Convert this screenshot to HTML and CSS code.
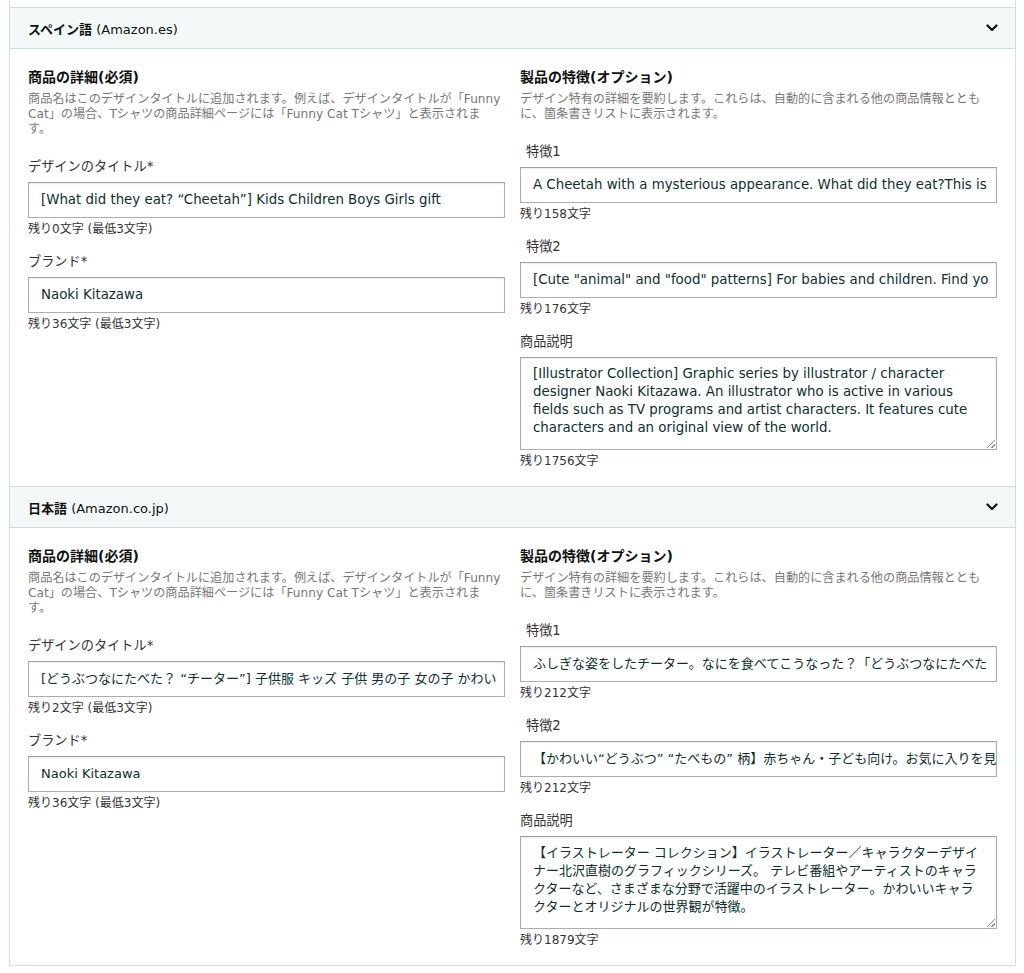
FILE: index.html
```html
<!DOCTYPE html>
<html lang="ja">
<head>
<meta charset="utf-8">
<title>Product details</title>
<link rel="stylesheet" href="styles.css">
</head>
<body>
<div class="panel">
  <div class="prev-tail"></div>

  <section class="lang latin">
    <div class="lang-head">
      <div class="lang-name"><b>スペイン語</b> (Amazon.es)</div>
      <svg class="chev" width="12" height="8" viewBox="0 0 12 8"><path d="M1.5 1.5 L6 6 L10.5 1.5" fill="none" stroke="#0f1111" stroke-width="2.2" stroke-linecap="round" stroke-linejoin="round"/></svg>
    </div>
    <div class="lang-body">
      <div class="col">
        <h3 class="sec-title">商品の詳細(必須)</h3>
        <p class="sec-desc">商品名はこのデザインタイトルに追加されます。例えば、デザインタイトルが「Funny Cat」の場合、Tシャツの商品詳細ページには「Funny Cat Tシャツ」と表示されま<br>す。</p>
        <div class="field">
          <div class="label">デザインのタイトル*</div>
          <div class="input">[What did they eat? “Cheetah”] Kids Children Boys Girls gift</div>
          <div class="hint">残り0文字 (最低3文字)</div>
        </div>
        <div class="field">
          <div class="label">ブランド*</div>
          <div class="input">Naoki Kitazawa</div>
          <div class="hint">残り36文字 (最低3文字)</div>
        </div>
      </div>
      <div class="col">
        <h3 class="sec-title">製品の特徴(オプション)</h3>
        <p class="sec-desc">デザイン特有の詳細を要約します。これらは、自動的に含まれる他の商品情報とともに、箇条書きリストに表示されます。</p>
        <div class="field">
          <div class="label indent">特徴1</div>
          <div class="input">A Cheetah with a mysterious appearance. What did they eat?This is</div>
          <div class="hint">残り158文字</div>
        </div>
        <div class="field">
          <div class="label indent">特徴2</div>
          <div class="input">[Cute "animal" and "food" patterns] For babies and children. Find yo</div>
          <div class="hint">残り176文字</div>
        </div>
        <div class="field">
          <div class="label">商品説明</div>
          <div class="textarea">[Illustrator Collection] Graphic series by illustrator / character designer Naoki Kitazawa. An illustrator who is active in various fields such as TV programs and artist characters. It features cute characters and an original view of the world.<span class="grip"></span></div>
          <div class="hint">残り1756文字</div>
        </div>
      </div>
    </div>
  </section>

  <section class="lang">
    <div class="lang-head">
      <div class="lang-name"><b>日本語</b> (Amazon.co.jp)</div>
      <svg class="chev" width="12" height="8" viewBox="0 0 12 8"><path d="M1.5 1.5 L6 6 L10.5 1.5" fill="none" stroke="#0f1111" stroke-width="2.2" stroke-linecap="round" stroke-linejoin="round"/></svg>
    </div>
    <div class="lang-body last">
      <div class="col">
        <h3 class="sec-title">商品の詳細(必須)</h3>
        <p class="sec-desc">商品名はこのデザインタイトルに追加されます。例えば、デザインタイトルが「Funny Cat」の場合、Tシャツの商品詳細ページには「Funny Cat Tシャツ」と表示されま<br>す。</p>
        <div class="field">
          <div class="label">デザインのタイトル*</div>
          <div class="input">[どうぶつなにたべた？ “チーター”] 子供服 キッズ 子供 男の子 女の子 かわい</div>
          <div class="hint">残り2文字 (最低3文字)</div>
        </div>
        <div class="field">
          <div class="label">ブランド*</div>
          <div class="input">Naoki Kitazawa</div>
          <div class="hint">残り36文字 (最低3文字)</div>
        </div>
      </div>
      <div class="col">
        <h3 class="sec-title">製品の特徴(オプション)</h3>
        <p class="sec-desc">デザイン特有の詳細を要約します。これらは、自動的に含まれる他の商品情報とともに、箇条書きリストに表示されます。</p>
        <div class="field">
          <div class="label indent">特徴1</div>
          <div class="input">ふしぎな姿をしたチーター。なにを食べてこうなった？「どうぶつなにたべた</div>
          <div class="hint">残り212文字</div>
        </div>
        <div class="field">
          <div class="label indent">特徴2</div>
          <div class="input">【かわいい“どうぶつ” “たべもの” 柄】赤ちゃん・子ども向け。お気に入りを見</div>
          <div class="hint">残り212文字</div>
        </div>
        <div class="field">
          <div class="label">商品説明</div>
          <div class="textarea">【イラストレーター コレクション】イラストレーター／キャラクターデザイナー北沢直樹のグラフィックシリーズ。 テレビ番組やアーティストのキャラクターなど、さまざまな分野で活躍中のイラストレーター。かわいいキャラクターとオリジナルの世界観が特徴。<span class="grip"></span></div>
          <div class="hint">残り1879文字</div>
        </div>
      </div>
    </div>
  </section>
</div>
</body>
</html>
```

FILE: styles.css
```css
* { box-sizing: border-box; }
html, body { margin: 0; padding: 0; background: #fff; }
body {
  font-family: "DejaVu Sans", "Noto Sans CJK JP", sans-serif;
  color: #0f1111;
}
.panel {
  margin: 0 8px 0 9px;
  width: 1007px;
}
.prev-tail {
  height: 7px;
  border-left: 1px solid #d2e3e5;
  border-right: 1px solid #d2e3e5;
}
.lang-head {
  height: 42px;
  background: #f4f8f9;
  border: 1px solid #cadfe2;
  display: flex;
  align-items: center;
  justify-content: space-between;
  padding: 0 17px 0 18px;
}
.lang-name {
  font-size: 13px;
  color: #0f1111;
}
.lang-name b { font-weight: 700; }
.chev { display: block; }
.lang-body {
  border-left: 1px solid #d2e3e5;
  border-right: 1px solid #d2e3e5;
  padding: 18px 17px 17px 18px;
  display: grid;
  grid-template-columns: 477px 477px;
  column-gap: 15px;
}
.lang-body.last { border-bottom: 1px solid #d2e3e5; }
.sec-title {
  margin: 0 0 5px;
  font-size: 14px;
  line-height: 20px;
  font-weight: 700;
  color: #0f1111;
}
.sec-desc {
  margin: 0 0 20px;
  font-size: 12.15px;
  line-height: 15px;
  color: #777;
}
.field { margin-bottom: 15px; }
.field:last-child { margin-bottom: 0; }
.label {
  font-size: 13.2px;
  line-height: 20px;
  color: #333;
  margin-bottom: 5px;
}
.label.indent { padding-left: 6px; }
.input {
  height: 36px;
  border: 1px solid #a9aeae;
  border-top-color: #9a9f9f;
  box-shadow: inset 0 1px 2px rgba(0,0,0,0.08);
  padding: 0 12px;
  font-size: 13px;
  line-height: 34px;
  color: #0c2f30;
  white-space: nowrap;
  overflow: hidden;
  background: #fff;
}
.textarea {
  position: relative;
  height: 93px;
  border: 1px solid #a9aeae;
  border-top-color: #9a9f9f;
  box-shadow: inset 0 1px 2px rgba(0,0,0,0.08);
  padding: 7px 12px;
  font-size: 13px;
  line-height: 18px;
  color: #0c2f30;
  overflow: hidden;
  background: #fff;
}
.latin .input,
.latin .textarea { font-size: 13.35px; }
.grip {
  position: absolute;
  right: 1px;
  bottom: 1px;
  width: 8px;
  height: 8px;
  background: linear-gradient(135deg, transparent 45%, #8a8a8a 45%, #8a8a8a 55%, transparent 55%, transparent 72%, #8a8a8a 72%, #8a8a8a 82%, transparent 82%);
}
.hint {
  margin-top: 3px;
  font-size: 12px;
  line-height: 16px;
  color: #333;
}
```
